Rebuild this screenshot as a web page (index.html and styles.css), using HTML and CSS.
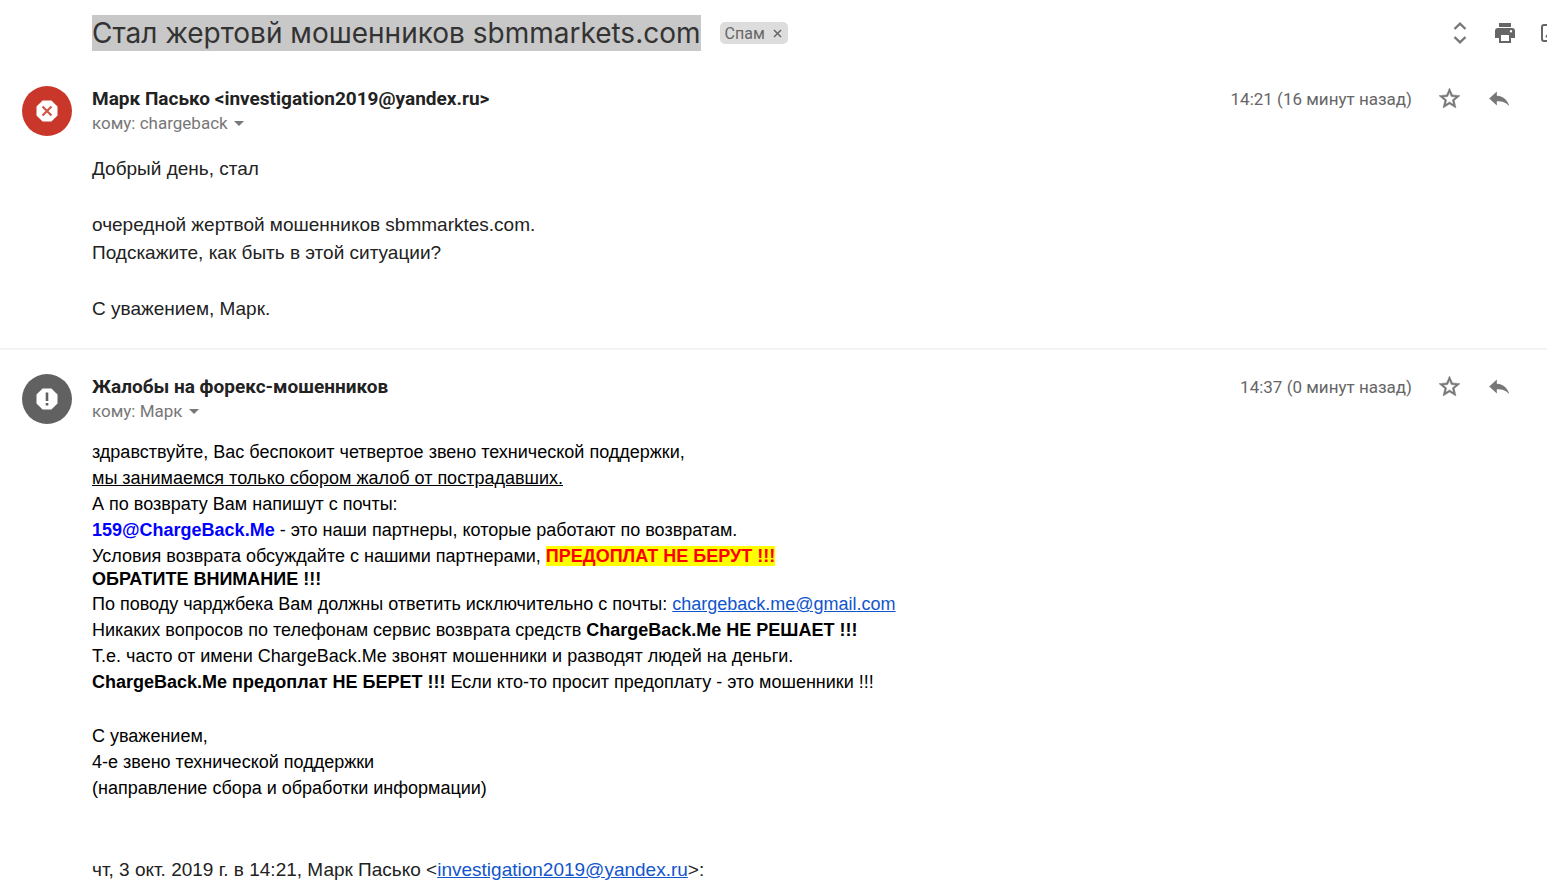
FILE: index.html
```html
<!DOCTYPE html>
<html lang="ru">
<head>
    <meta charset="utf-8">
    <title>Стал жертовй мошенников sbmmarkets.com</title>
    <link rel="stylesheet" href="styles.css">
</head>
<body>
    <header class="subject">
        <h1><span class="selected">Стал жертовй мошенников sbmmarkets.com</span></h1>
        <div class="label">
            <span>Спам</span>
            <button aria-label="Удалить ярлык"><svg width="9" height="9" viewBox="0 0 9 9"><path d="M1 1l7 7M8 1l-7 7" stroke="#666" stroke-width="1.500"/></svg></button>
        </div>
        <div class="toolbar">
            <button aria-label="Развернуть все"><svg width="24" height="24" viewBox="0 0 24 24"><path d="M6.500 8L12 2.700l5.500 5.300M6.500 16l5.500 5.300 5.500-5.300" fill="none" stroke="#777" stroke-width="2.400"/></svg></button>
            <button aria-label="Печать"><svg width="24" height="24" viewBox="0 0 24 24"><path fill="#666" fill-rule="evenodd" d="M6 2h12v4H6zM5 7h14a3 3 0 0 1 3 3v7h-4v5H6v-5H2v-7a3 3 0 0 1 3-3zm3 7v6h8v-6zm10-5a1.200 1.200 0 1 0 0 2.400 1.200 1.200 0 0 0 0-2.400z"/></svg></button>
            <button aria-label="В новом окне"><svg width="24" height="24" viewBox="0 0 24 24"><path fill="none" stroke="#666" stroke-width="2" d="M12 4H6a2 2 0 0 0-2 2v12a2 2 0 0 0 2 2h12a2 2 0 0 0 2-2v-6M15 4h5v5M8 16L20 4"/></svg></button>
        </div>
    </header>

    <article class="message">
        <div class="avatar red">
            <svg width="22" height="22" viewBox="0 0 22 22"><path fill="#fff" d="M6.600 0.500h8.800l6.100 6.100v8.800l-6.100 6.100H6.600L.5 15.400V6.600z"/><path d="M6.500 6.500l9 9M15.500 6.500l-9 9" stroke="#d0564a" stroke-width="2.200"/></svg>
        </div>
        <div class="content">
            <div class="head">
                <div class="from">
                    <h2>Марк Пасько &lt;investigation2019@yandex.ru&gt;</h2>
                    <button class="to">кому: chargeback <i class="arrow"></i></button>
                </div>
                <div class="actions">
                    <time>14:21 (16 минут назад)</time>
                    <button aria-label="Пометить"><svg width="25" height="25" viewBox="0 0 24 24"><path fill="#777" stroke="#777" stroke-width=".5" d="M22 9.240l-7.190-.62L12 2 9.190 8.630 2 9.240l5.460 4.730L5.820 21 12 17.270 18.180 21l-1.630-7.030zM12 15.400l-3.760 2.270 1-4.280-3.320-2.880 4.380-.38L12 6.100l1.710 4.040 4.380.38-3.320 2.880 1 4.280z"/></svg></button>
                    <button aria-label="Ответить"><svg width="26" height="26" viewBox="0 0 24 24"><path fill="#777" d="M10 9V5l-7 6.500 7 6.500v-4c5 0 8.500 1.200 11.500 4.500-1.500-5-5-9-11.500-9.500z"/></svg></button>
                </div>
            </div>
            <div class="text first">
                Добрый день, стал<br>
                <br>
                очередной жертвой мошенников sbmmarktes.com.<br>
                Подскажите, как быть в этой ситуации?<br>
                <br>
                С уважением, Марк.
            </div>
        </div>
    </article>

    <article class="message">
        <div class="avatar gray">
            <svg width="22" height="22" viewBox="0 0 22 22"><path fill="#fff" d="M6.600 0.500h8.800l6.100 6.100v8.800l-6.100 6.100H6.600L.5 15.400V6.600z"/><path fill="#616161" d="M9.700 4.500h2.600v8.500H9.700zM9.700 15h2.600v2.600H9.700z"/></svg>
        </div>
        <div class="content">
            <div class="head">
                <div class="from">
                    <h2>Жалобы на форекс-мошенников</h2>
                    <button class="to">кому: Марк <i class="arrow"></i></button>
                </div>
                <div class="actions">
                    <time>14:37 (0 минут назад)</time>
                    <button aria-label="Пометить"><svg width="25" height="25" viewBox="0 0 24 24"><path fill="#777" stroke="#777" stroke-width=".5" d="M22 9.240l-7.190-.62L12 2 9.190 8.630 2 9.240l5.460 4.730L5.820 21 12 17.270 18.180 21l-1.630-7.030zM12 15.400l-3.760 2.270 1-4.280-3.320-2.880 4.380-.38L12 6.100l1.710 4.040 4.380.38-3.320 2.880 1 4.280z"/></svg></button>
                    <button aria-label="Ответить"><svg width="26" height="26" viewBox="0 0 24 24"><path fill="#777" d="M10 9V5l-7 6.500 7 6.500v-4c5 0 8.500 1.200 11.500 4.500-1.500-5-5-9-11.500-9.500z"/></svg></button>
                </div>
            </div>
            <div class="text second">
                <p>здравствуйте, Вас беспокоит четвертое звено технической поддержки,<br>
                <u>мы занимаемся только сбором жалоб от пострадавших.</u><br>
                А по возврату Вам напишут с почты:<br>
                <b class="blue">159@ChargeBack.Me</b> - это наши партнеры, которые работают по возвратам.<br>
                Условия возврата обсуждайте с нашими партнерами, <b class="warning">ПРЕДОПЛАТ НЕ БЕРУТ !!!</b></p>
                <p class="attention">ОБРАТИТЕ ВНИМАНИЕ !!!</p>
                <p>По поводу чарджбека Вам должны ответить исключительно с почты: <a href="mailto:chargeback.me@gmail.com">chargeback.me@gmail.com</a><br>
                Никаких вопросов по телефонам сервис возврата средств <b>ChargeBack.Me НЕ РЕШАЕТ !!!</b><br>
                Т.е. часто от имени ChargeBack.Me звонят мошенники и разводят людей на деньги.<br>
                <b>ChargeBack.Me предоплат НЕ БЕРЕТ !!!</b> Если кто-то просит предоплату - это мошенники !!!</p>
                <p class="sign">С уважением,<br>
                4-е звено технической поддержки<br>
                (направление сбора и обработки информации)</p>
                <p class="quote">чт, 3 окт. 2019 г. в 14:21, Марк Пасько &lt;<a href="mailto:investigation2019@yandex.ru">investigation2019@yandex.ru</a>&gt;:</p>
            </div>
        </div>
    </article>
</body>
</html>
```
FILE: styles.css
```css
*{
    margin: 0;
    padding: 0;
    box-sizing: border-box;
}
body{
    background: #fff;
    color: #222;
    font-family: Roboto, "Liberation Sans", sans-serif;
    overflow: hidden;
}
button{
    border: 0;
    background: none;
    color: inherit;
    font: inherit;
    cursor: pointer;
}
.subject{
    display: flex;
    align-items: center;
    height: 66px;
    padding-left: 92px;
}
.subject h1{
    font-family: Inter, Roboto, sans-serif;
    font-size: 28px;
    font-weight: 400;
    line-height: 36px;
    white-space: nowrap;
}
.selected{
    display: block;
    background: #c8c8c8;
    color: #333;
}
.label{
    display: flex;
    align-items: center;
    gap: 8px;
    height: 22px;
    margin-left: 19px;
    padding: 0 6px 0 5px;
    border-radius: 5px;
    background: #ddd;
    color: #666;
    font-size: 16px;
}
.label button{
    display: flex;
}
/* the last button runs past the right edge */
.toolbar{
    display: flex;
    margin-left: auto;
    margin-right: -25px;
}
.toolbar button{
    display: flex;
    justify-content: center;
    width: 45px;
}
.message{
    display: flex;
    gap: 20px;
    padding: 20px 23px 25px 22px;
}
.message + .message{
    border-top: 2px solid #f3f3f3;
    padding-top: 24px;
}
.avatar{
    display: flex;
    align-items: center;
    justify-content: center;
    flex: none;
    width: 50px;
    height: 50px;
    border-radius: 50%;
}
.red{
    background: #c9372a;
}
.gray{
    background: #616161;
}
.content{
    flex: 1;
}
.head{
    display: flex;
    justify-content: space-between;
    height: 50px;
}
.from h2{
    font-size: 19px;
    font-weight: 700;
    line-height: 25px;
}
.to{
    display: flex;
    align-items: center;
    gap: 6px;
    color: #777;
    font-size: 17px;
    line-height: 25px;
}
.arrow{
    border: 5px solid transparent;
    border-top-color: #777;
    border-bottom: 0;
}
.actions{
    display: flex;
    align-items: center;
    height: 25px;
    color: #666;
    font-size: 17px;
}
.actions time{
    margin-right: 12px;
}
.actions button{
    display: flex;
    justify-content: center;
    width: 50px;
}
.text{
    font-family: "Liberation Sans", Arial, sans-serif;
    font-size: 18px;
}
.first{
    margin-top: 19px;
    font-size: 19px;
    line-height: 28px;
}
.second{
    margin-top: 15px;
    color: #000;
    line-height: 26px;
}
.text a{
    color: #15c;
}
.text .blue{
    color: #00f;
}
.warning{
    background: #ff0;
    color: #f00;
}
.attention{
    margin-bottom: 2px;
    font-weight: 700;
    line-height: 20px;
}
.sign{
    margin-top: 28px;
}
.quote{
    margin-top: 56px;
    color: #222;
    font-size: 19px;
}
```
